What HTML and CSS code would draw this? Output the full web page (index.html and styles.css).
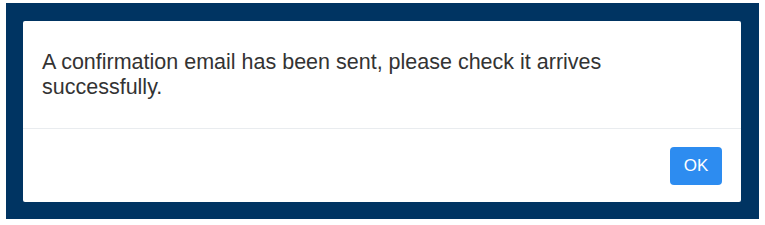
FILE: index.html
```html
<!DOCTYPE html>
<html lang="en">
<head>
    <meta charset="UTF-8">
    <title>Confirmation</title>
    <link rel="stylesheet" href="styles.css">
</head>
<body>
    <div class="backdrop">
        <div class="dialog">
            <div class="dialog-body">
                <p>A confirmation email has been sent, please check it arrives successfully.</p>
            </div>
            <div class="dialog-footer">
                <button type="button" class="ok-btn">OK</button>
            </div>
        </div>
    </div>
</body>
</html>
```

FILE: styles.css
```css
/* General Styles */
body {
    margin: 0;
    padding: 3px 6px 6px 6px;
    background: #ffffff;
    font-family: "Liberation Sans", Arial, sans-serif;
}

.backdrop {
    background: #003462;
    padding: 18px 18px 17px 17px;
}

.dialog {
    background: #ffffff;
    border-radius: 2px;
}

.dialog-body {
    padding: 29px 19px 28px 19px;
    border-bottom: 1px solid #e9ecef;
}

.dialog-body p {
    margin: 0;
    font-size: 21.5px;
    line-height: 25px;
    color: #333333;
}

.dialog-footer {
    display: flex;
    justify-content: flex-end;
    padding: 18px 19px 17px 19px;
}

.ok-btn {
    width: 52px;
    height: 38px;
    background: #2d8cf0;
    color: #ffffff;
    font-family: "Liberation Sans", Arial, sans-serif;
    font-size: 17px;
    border: none;
    border-radius: 4px;
    cursor: pointer;
}
```
